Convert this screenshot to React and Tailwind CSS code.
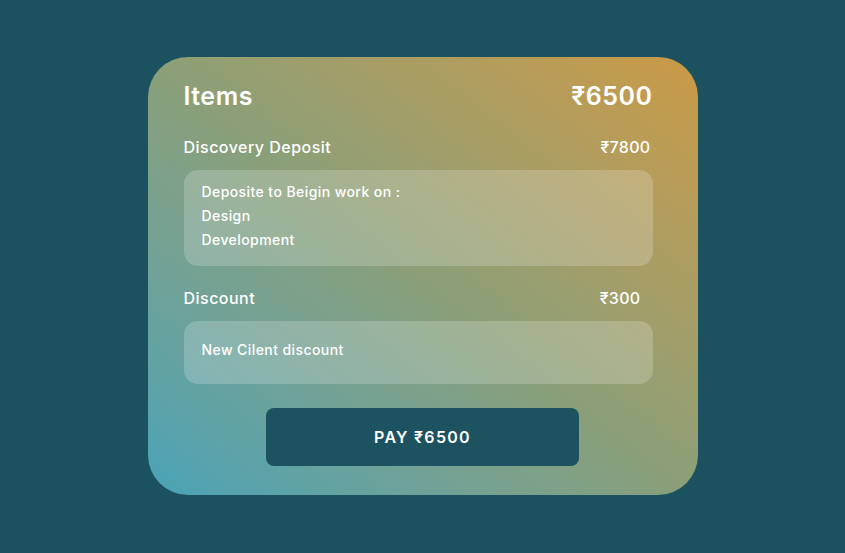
const font = { fontFamily: '"Inter", "Noto Sans", "DejaVu Sans", sans-serif' };

const LineItem = ({ title, amount, amountClass = "", children, boxClass }) => {
  return (
    <div>
      <div className="flex items-center justify-between h-6">
        <span className="text-[16px] font-medium tracking-[0.03em]">{title}</span>
        <span className={`text-[16px] font-medium tracking-[0.02em] ${amountClass}`}>{amount}</span>
      </div>
      <div className={`mt-[11px] rounded-[14px] bg-white/20 px-[18px] text-[14px] font-medium leading-6 tracking-[0.03em] ${boxClass}`}>
        {children}
      </div>
    </div>
  );
};

const App = () => {
  return (
    <div className="w-screen h-screen bg-[#1c5260] flex items-start justify-center pt-[57px]" style={font}>
      <div className="w-[550px] h-[438px] rounded-[40px] bg-gradient-to-tr from-[#48a3b7] via-[#8b9f78] to-[#cb9a44] text-white pl-[36px] pr-[45px] pt-6 flex flex-col">
        <div className="flex items-center justify-between h-8">
          <span className="text-[25px] font-semibold tracking-[0.02em]">Items</span>
          <span className="text-[25px] font-semibold tracking-[0.02em]">₹6500</span>
        </div>

        <div className="mt-[22px]">
          <LineItem title="Discovery Deposit" amount="₹7800" amountClass="mr-[2px]" boxClass="h-[96px] pt-[10px]">
            <div>Deposite to Beigin work on :</div>
            <div>Design</div>
            <div>Development</div>
          </LineItem>
        </div>

        <div className="mt-[20px]">
          <LineItem title="Discount" amount="₹300" amountClass="mr-[12px]" boxClass="h-[63px] pt-[17px]">
            <div>New Cilent discount</div>
          </LineItem>
        </div>

        <div className="mt-6 flex justify-center pl-[9px]">
          <button className="w-[313px] h-[58px] rounded-lg bg-[#1d5260] text-[16px] font-semibold tracking-[0.08em]">
            PAY ₹6500
          </button>
        </div>
      </div>
    </div>
  );
};

export default App;
